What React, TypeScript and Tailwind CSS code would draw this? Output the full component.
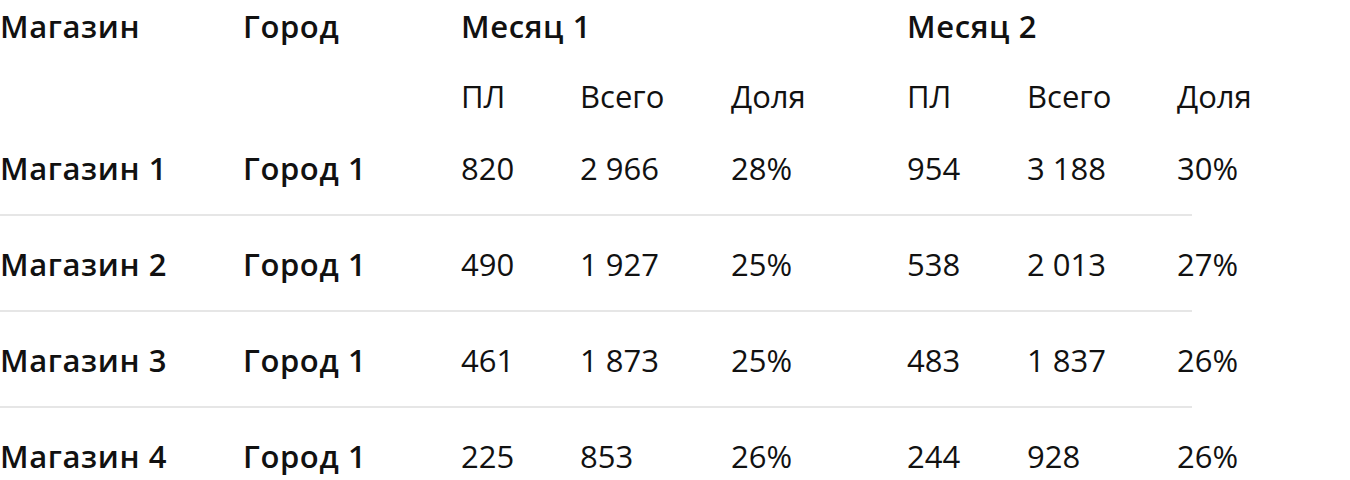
import React from "react";

const cols = "grid grid-cols-[243px_218px_119px_151px_176px_120px_150px_15px] w-[1192px]";

const rows = [
  ["Магазин 1", "Город 1", "820", "2 966", "28%", "954", "3 188", "30%"],
  ["Магазин 2", "Город 1", "490", "1 927", "25%", "538", "2 013", "27%"],
  ["Магазин 3", "Город 1", "461", "1 873", "25%", "483", "1 837", "26%"],
  ["Магазин 4", "Город 1", "225", "853", "26%", "244", "928", "26%"],
];

const bold = "font-['Open_Sans',sans-serif] font-semibold tracking-[0.02em] text-[31px] leading-[40px] whitespace-nowrap";
const reg = "font-['Open_Sans',sans-serif] text-[31px] leading-[40px] whitespace-nowrap";

export default function App() {
  return (
    <div className="bg-white w-[1350px] h-[480px] overflow-hidden text-[#111111]">
      <div className="pb-[4px]">
        <div className={`${cols} pt-[6px]`}>
          <div className={bold}>Магазин</div>
          <div className={bold}>Город</div>
          <div className={`${bold} col-span-3`}>Месяц 1</div>
          <div className={`${bold} col-span-3`}>Месяц 2</div>
        </div>
        <div className={`${cols} pt-[30px]`}>
          <div></div>
          <div></div>
          <div className={reg}>ПЛ</div>
          <div className={reg}>Всего</div>
          <div className={reg}>Доля</div>
          <div className={reg}>ПЛ</div>
          <div className={reg}>Всего</div>
          <div className={reg}>Доля</div>
        </div>
      </div>
      {rows.map((r, i) => (
        <div key={i} className={`${cols} pt-[28px] pb-[26px] ${i < rows.length - 1 ? "border-b-2 border-[#e6e6e6]" : ""}`}>
          {r.map((c, j) => (
            <div key={j} className={j < 2 ? bold : reg}>{c}</div>
          ))}
        </div>
      ))}
    </div>
  );
}
